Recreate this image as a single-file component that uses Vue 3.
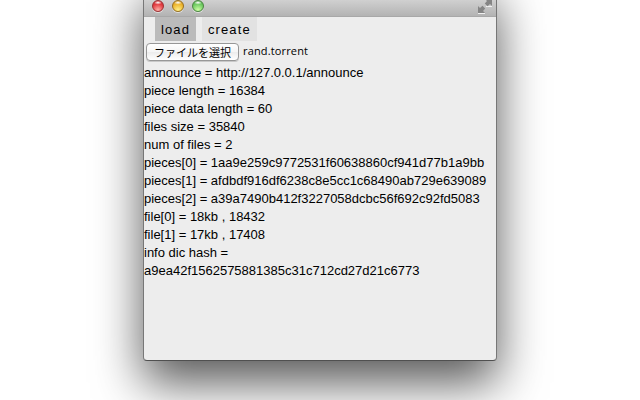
<script setup>
const lights = ['red', 'yellow', 'green']
const tabs = ['load', 'create']
const rows = [
  'announce = http://127.0.0.1/announce',
  'piece length = 16384',
  'piece data length = 60',
  'files size = 35840',
  'num of files = 2',
  'pieces[0] = 1aa9e259c9772531f60638860cf941d77b1a9bb',
  'pieces[1] = afdbdf916df6238c8e5cc1c68490ab729e639089',
  'pieces[2] = a39a7490b412f3227058dcbc56f692c92fd5083',
  'file[0] = 18kb , 18432',
  'file[1] = 17kb , 17408',
  'info dic hash =',
  'a9ea42f1562575881385c31c712cd27d21c6773',
]
</script>

<template>
  <div class="desktop">
    <main class="window">
      <header class="titlebar">
        <span v-for="c in lights" :key="c" class="light" :class="c"></span>
        <svg class="expand" width="15" height="14" viewBox="0 0 15 14">
          <path d="M0 13.5h7M8 6.5h6" stroke="#f0f0f0" fill="none" />
          <path d="M0 6l2 2L4.5 5.8 7.2 8.5 5 11l2 2H0zM14 6l-2-2L9.5 6.2 6.8 3.5 9 1 7-1h7z" fill="#858585" />
        </svg>
      </header>
      <nav class="tabs">
        <span v-for="(t, i) in tabs" :key="t" class="tab" :class="{ active: i === 0 }">{{ t }}</span>
      </nav>
      <div class="picker">
        <button class="choose">ファイルを選択</button>
        <span class="filename">rand.torrent</span>
      </div>
      <div class="info">
        <div v-for="r in rows" :key="r" class="row">{{ r }}</div>
      </div>
    </main>
  </div>
</template>

<style>
body { background: #fff; }
</style>

<style scoped>
.desktop {
  width: 640px;
  height: 400px;
  overflow: hidden;
  display: flex;
  padding-left: 143px;
  box-sizing: border-box;
  font-family: "Liberation Sans", Arial, sans-serif;
  color: #000;
}
.window {
  box-sizing: border-box;
  width: 354px;
  height: 381px;
  margin-top: -20px;
  padding-top: 20px;
  border: 1px solid #777;
  border-top: 0;
  border-bottom-color: #505050;
  border-radius: 0 0 4px 4px;
  background: #ededed;
  box-shadow: 0 22px 48px rgba(0, 0, 0, .66);
}
.titlebar {
  box-sizing: border-box;
  height: 17px;
  display: flex;
  align-items: flex-start;
  gap: 8px;
  padding: 0 3px 0 8px;
  background: linear-gradient(#d0d0d0, #b3b3b3);
  border-bottom: 1px solid #a8a8a8;
}
.light {
  box-sizing: border-box;
  width: 12px;
  height: 12px;
  border-radius: 50%;
  border: 1px solid;
  box-shadow: 0 1px 0 #e0e0e0;
}
.red {
  border-color: #9c3033;
  background: radial-gradient(ellipse 4px 2px at 50% 16%, #fff, transparent), radial-gradient(circle at 50% 90%, #ffb0a8, #e33b40 60%, #c92c34);
}
.yellow {
  border-color: #98701f;
  background: radial-gradient(ellipse 4px 2px at 50% 16%, #fff, transparent), radial-gradient(circle at 50% 90%, #fff18a, #edb52c 60%, #cc8e1d);
}
.green {
  border-color: #4b8541;
  background: radial-gradient(ellipse 4px 2px at 50% 16%, #fff, transparent), radial-gradient(circle at 50% 90%, #cfffa5, #6fcb62 60%, #4da547);
}
.expand { margin-left: auto; }
.tabs {
  display: flex;
  gap: 6px;
  padding-left: 11px;
}
.tab {
  box-sizing: border-box;
  height: 24px;
  padding: 0 6px;
  font-size: 13px;
  line-height: 25px;
  letter-spacing: 1.1px;
  background: #e2e2e2;
}
.tab.active { background: #bbb; }
.picker {
  display: flex;
  gap: 4px;
  height: 23px;
  padding: 2px 2px 0;
  box-sizing: border-box;
}
.choose {
  box-sizing: border-box;
  width: 93px;
  height: 18px;
  padding: 0;
  border: 1px solid #979797;
  border-radius: 4px;
  background: linear-gradient(#fff, #f5f5f5 50%, #ececec 51%, #fff);
  box-shadow: 0 1px 0 #c8c8c8;
  font: 11px/15px "Noto Sans CJK JP", sans-serif;
  color: #000;
  white-space: nowrap;
}
.filename {
  font: 11px/16px "Open Sans", "Noto Sans", sans-serif;
  letter-spacing: .15px;
}
.row {
  font-size: 13px;
  line-height: 18px;
  height: 18px;
  white-space: nowrap;
}
</style>
